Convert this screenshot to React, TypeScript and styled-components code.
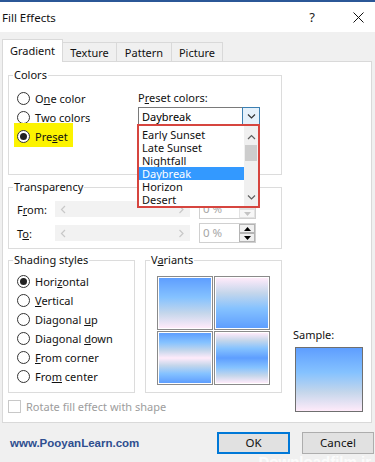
import React from "react";
import styled, { createGlobalStyle, css } from "styled-components";

const daybreak = ["#5e9eff", "#85c2ff", "#c4d6eb", "#ffebfa"];

const gradients = {
  down: `linear-gradient(180deg, ${daybreak[0]} 0%, ${daybreak[1]} 39%, ${daybreak[2]} 70%, ${daybreak[3]} 100%)`,
  up: `linear-gradient(0deg, ${daybreak[0]} 0%, ${daybreak[1]} 39%, ${daybreak[2]} 70%, ${daybreak[3]} 100%)`,
  outer: `linear-gradient(180deg, ${daybreak[0]} 0%, ${daybreak[1]} 19%, ${daybreak[2]} 35%, ${daybreak[3]} 50%, ${daybreak[2]} 65%, ${daybreak[1]} 81%, ${daybreak[0]} 100%)`,
  inner: `linear-gradient(180deg, ${daybreak[3]} 0%, ${daybreak[2]} 15%, ${daybreak[1]} 31%, ${daybreak[0]} 50%, ${daybreak[1]} 69%, ${daybreak[2]} 85%, ${daybreak[3]} 100%)`,
};

const tabs = [
  { name: "Gradient", width: 61 },
  { name: "Texture", width: 54 },
  { name: "Pattern", width: 55 },
  { name: "Picture", width: 51 },
];

const presets = ["Early Sunset", "Late Sunset", "Nightfall", "Daybreak", "Horizon", "Desert"];

const shading = [
  "Hori&zontal",
  "&Vertical",
  "Diagonal &up",
  "Diagonal &down",
  "&From corner",
  "Fro&m center",
];

// "&" marks the access key, as in a Windows resource file
function accel(text: string) {
  const i = text.indexOf("&");
  if (i < 0) return text;
  return (
    <>
      {text.slice(0, i)}
      <u>{text[i + 1]}</u>
      {text.slice(i + 2)}
    </>
  );
}

function Radio({ label, checked, highlight }: { label: string; checked?: boolean; highlight?: boolean }) {
  return (
    <RadioRow $highlight={highlight}>
      <RadioCircle $checked={checked} />
      <span>{accel(label)}</span>
    </RadioRow>
  );
}

function Chevron({ dir, color = "#606060" }: { dir: "up" | "down" | "left" | "right"; color?: string }) {
  const d = {
    up: "M1 5 L4.5 1.5 L8 5",
    down: "M1 1.5 L4.5 5 L8 1.5",
    left: "M5 1 L1.5 4.5 L5 8",
    right: "M1.5 1 L5 4.5 L1.5 8",
  }[dir];
  const vertical = dir === "up" || dir === "down";
  return (
    <svg width={vertical ? 9 : 7} height={vertical ? 7 : 9} viewBox={vertical ? "0 0 9 7" : "0 0 7 9"}>
      <path d={d} fill="none" stroke={color} strokeWidth="1.2" />
    </svg>
  );
}

function Spin({ disabled }: { disabled?: boolean }) {
  const c = disabled ? "#c4c4c4" : "#000";
  return (
    <SpinBox>
      <SpinText>0 %</SpinText>
      <SpinButtons>
        <SpinButton $disabled={disabled}>
          <svg width="7" height="4" viewBox="0 0 7 4">
            <path d="M0 4 L3.5 0 L7 4 Z" fill={c} />
          </svg>
        </SpinButton>
        <SpinButton $disabled={disabled}>
          <svg width="7" height="4" viewBox="0 0 7 4">
            <path d="M0 0 L3.5 4 L7 0 Z" fill={c} />
          </svg>
        </SpinButton>
      </SpinButtons>
    </SpinBox>
  );
}

function TransparencyRow({ label, disabled }: { label: string; disabled?: boolean }) {
  return (
    <TransRow>
      <TransLabel>{accel(label)}</TransLabel>
      <Slider>
        <Chevron dir="left" color="#c8c8c8" />
        <Chevron dir="right" color="#c8c8c8" />
      </Slider>
      <Spin disabled={disabled} />
    </TransRow>
  );
}

export default function App() {
  return (
    <>
      <GlobalStyle />
      <Window>
        <TitleBar>
          <Title>Fill Effects</Title>
          <TitleButtons>
            <TitleButton>?</TitleButton>
            <TitleButton>
              <svg width="11" height="11" viewBox="0 0 11 11">
                <path d="M0.5 0.5 L10.5 10.5 M10.5 0.5 L0.5 10.5" stroke="#111" strokeWidth="1" />
              </svg>
            </TitleButton>
          </TitleButtons>
        </TitleBar>

        <TabStrip>
          {tabs.map((t, i) => (
            <Tab key={t.name} $active={i === 0} $width={t.width}>
              {t.name}
            </Tab>
          ))}
        </TabStrip>

        <Panel>
          <MainColumn>
            <Group $pad="7px 8px 28px 8px">
              <Legend>Colors</Legend>
              <ColorsGrid>
                <RadioColumn>
                  <Radio label="O&ne color" />
                  <Radio label="&Two colors" />
                  <Radio label="Pre&set" checked highlight />
                </RadioColumn>
                <div>
                  <PresetLabel>{accel("P&reset colors:")}</PresetLabel>
                  <Combo>
                    <ComboText>Daybreak</ComboText>
                    <ComboButton>
                      <Chevron dir="down" color="#333" />
                    </ComboButton>
                  </Combo>
                </div>
              </ColorsGrid>
            </Group>

            <Group $pad="5px 8px 5px 8px" $top={5}>
              <Legend>Transparency</Legend>
              <TransRows>
                <TransparencyRow label="F&rom:" disabled />
                <TransparencyRow label="T&o:" />
              </TransRows>
            </Group>

            <GroupRow>
              <Group $pad="5px 8px 6px 8px" $width={127}>
                <Legend>Shading styles</Legend>
                {shading.map((s, i) => (
                  <Radio key={s} label={s} checked={i === 0} />
                ))}
              </Group>
              <Group $pad="9px 8px 0 11px" $grow>
                <VariantsLegend>{accel("V&ariants")}</VariantsLegend>
                <TileGrid>
                  <Tile $fill={gradients.down} />
                  <Tile $fill={gradients.up} />
                  <Tile $fill={gradients.outer} />
                  <Tile $fill={gradients.inner} />
                </TileGrid>
              </Group>
            </GroupRow>

            <CheckRow>
              <CheckBox />
              <span>Rotate fill effect with shape</span>
            </CheckRow>
          </MainColumn>

          <SampleColumn>
            <SampleLabel>Sample:</SampleLabel>
            <SampleBox $fill={gradients.down} />
          </SampleColumn>

          <PresetList>
            <ListItems>
              {presets.map((p) => (
                <ListItem key={p} $selected={p === "Daybreak"}>
                  {p}
                </ListItem>
              ))}
            </ListItems>
            <ScrollBar>
              <ScrollArrow>
                <Chevron dir="up" />
              </ScrollArrow>
              <ScrollThumb />
              <ScrollSpacer />
              <ScrollArrow>
                <Chevron dir="down" />
              </ScrollArrow>
            </ScrollBar>
          </PresetList>
        </Panel>

        <Footer>
          <SiteLink>www.PooyanLearn.com</SiteLink>
          <Button $default $width={73}>OK</Button>
          <Button $width={72}>Cancel</Button>
        </Footer>

        <Watermark>Downloadfilm.ir</Watermark>
      </Window>
    </>
  );
}

const GlobalStyle = createGlobalStyle`
  html, body {
    margin: 0;
    padding: 0;
  }

  body {
    font-family: "Noto Sans", "Segoe UI", sans-serif;
    font-size: 11px;
    color: #000;
    background: #f0f0f0;
  }

  * {
    box-sizing: border-box;
  }
`;

const Window = styled.div`
  position: relative;
  width: 375px;
  height: 462px;
  overflow: hidden;
  background: #f0f0f0;
`;

const TitleBar = styled.div`
  height: 32px;
  border-top: 2px solid #2b5797;
  background: #fff;
  display: flex;
  align-items: center;
  padding-left: 2px;
`;

const Title = styled.div`
  flex: 1;
  font-size: 11.5px;
  color: #111;
`;

const TitleButtons = styled.div`
  display: flex;
  height: 100%;
  margin-right: -6px;
`;

const TitleButton = styled.div`
  width: 46px;
  display: flex;
  align-items: center;
  justify-content: center;
  font-size: 13px;
  color: #222;
`;

const TabStrip = styled.div`
  height: 29px;
  display: flex;
  align-items: flex-end;
  padding-left: 2px;
  position: relative;
  z-index: 1;
`;

const Tab = styled.div<{ $active?: boolean; $width: number }>`
  width: ${(p) => p.$width}px;
  height: 19px;
  display: flex;
  align-items: center;
  justify-content: center;
  border: 1px solid #d9d9d9;
  border-bottom: none;
  border-left-width: 0;
  background: #f0f0f0;
  color: #111;

  ${(p) =>
    p.$active &&
    css`
      height: 23px;
      margin-bottom: -1px;
      border-left-width: 1px;
      background: #fff;
      padding-bottom: 2px;
    `}
`;

const Panel = styled.div`
  position: relative;
  margin-left: 2px;
  width: 370px;
  height: 362px;
  border: 1px solid #d9d9d9;
  background: #fff;
  display: flex;
  padding: 6px 0 9px 5px;
`;

const MainColumn = styled.div`
  width: 274px;
  display: flex;
  flex-direction: column;
`;

const Group = styled.fieldset<{ $pad: string; $top?: number; $width?: number; $grow?: boolean }>`
  margin: ${(p) => p.$top ?? 0}px 0 0 0;
  padding: ${(p) => p.$pad};
  border: 1px solid #dcdcdc;
  min-width: 0;
  ${(p) => p.$width && `width: ${p.$width}px;`}
  ${(p) => p.$grow && `flex: 1;`}
`;

const Legend = styled.legend`
  margin-left: -4px;
  padding: 0 1px;
  line-height: 14px;
  color: #111;
`;

const VariantsLegend = styled(Legend)`
  margin-left: -7px;
`;

const ColorsGrid = styled.div`
  display: grid;
  grid-template-columns: 121px 122px;
`;

const RadioColumn = styled.div`
  display: flex;
  flex-direction: column;
  align-items: flex-start;
`;

const RadioRow = styled.label<{ $highlight?: boolean }>`
  display: flex;
  align-items: center;
  gap: 5px;
  height: 19px;
  color: #111;

  ${(p) =>
    p.$highlight &&
    css`
      height: 24px;
      margin: -4px 0 -1px -3px;
      padding: 4px 5px 1px 3px;
      background: #fcf300;
    `}
`;

const RadioCircle = styled.span<{ $checked?: boolean }>`
  width: 13px;
  height: 13px;
  flex: none;
  border-radius: 50%;
  border: 1px solid #333;
  background: #fff;
  display: flex;
  align-items: center;
  justify-content: center;

  &::after {
    content: "";
    width: 7px;
    height: 7px;
    border-radius: 50%;
    background: #222;
    display: ${(p) => (p.$checked ? "block" : "none")};
  }
`;

const PresetLabel = styled.div`
  line-height: 17px;
  color: #111;
`;

const Combo = styled.div`
  margin-top: 1px;
  width: 122px;
  height: 21px;
  border: 1px solid #7a7a7a;
  display: flex;
  background: #fff;
`;

const ComboText = styled.div`
  flex: 1;
  padding: 1px 0 0 3px;
  line-height: 16px;
`;

const ComboButton = styled.div`
  width: 18px;
  margin: -1px -1px -1px 0;
  border: 1px solid #3c7fb1;
  background: #e5f1fb;
  display: flex;
  align-items: center;
  justify-content: center;
  padding-bottom: 2px;
`;

const TransRows = styled.div`
  display: flex;
  flex-direction: column;
  gap: 4px;
`;

const TransRow = styled.div`
  display: flex;
  align-items: center;
  height: 20px;
`;

const TransLabel = styled.div`
  width: 38px;
  color: #111;
`;

const Slider = styled.div`
  width: 135px;
  height: 16px;
  background: #f2f2f2;
  display: flex;
  align-items: center;
  justify-content: space-between;
  padding: 0 5px;
  margin-right: 9px;
`;

const SpinBox = styled.div`
  width: 57px;
  height: 20px;
  border: 1px solid #d0d0d0;
  display: flex;
  background: #fff;
`;

const SpinText = styled.div`
  flex: 1;
  padding-left: 3px;
  line-height: 18px;
  font-size: 11.5px;
  color: #a6a6a6;
`;

const SpinButtons = styled.div`
  width: 16px;
  display: flex;
  flex-direction: column;
`;

const SpinButton = styled.div<{ $disabled?: boolean }>`
  flex: 1;
  display: flex;
  align-items: center;
  justify-content: center;
  border: 1px solid ${(p) => (p.$disabled ? "#e2e2e2" : "#b4b4b4")};
  background: ${(p) => (p.$disabled ? "#f7f7f7" : "#f0f0f0")};
`;

const GroupRow = styled.div`
  display: flex;
  gap: 10px;
  margin-top: 4px;
`;

const TileGrid = styled.div`
  display: grid;
  grid-template-columns: 56px 56px;
  grid-auto-rows: 54px;
  gap: 1px;
`;

const Tile = styled.div<{ $fill: string }>`
  border: 1px solid #8a8a8a;
  padding: 1px;
  background: ${(p) => p.$fill} content-box, #fff;
`;

const CheckRow = styled.div`
  display: flex;
  align-items: center;
  gap: 5px;
  height: 13px;
  margin-top: 7px;
  color: #9d9d9d;
`;

const CheckBox = styled.span`
  width: 13px;
  height: 13px;
  border: 1px solid #c8c8c8;
  background: #fff;
`;

const SampleColumn = styled.div`
  margin-left: 11px;
  display: flex;
  flex-direction: column;
  justify-content: flex-end;
  padding-bottom: 1px;
`;

const SampleLabel = styled.div`
  line-height: 14px;
  margin-bottom: 5px;
  color: #111;
`;

const SampleBox = styled.div<{ $fill: string }>`
  margin-left: 2px;
  width: 68px;
  height: 65px;
  border: 1px solid #6f6f6f;
  background: ${(p) => p.$fill};
`;

const PresetList = styled.div`
  position: absolute;
  left: 134px;
  top: 62px;
  width: 123px;
  height: 84px;
  border: 2px solid #d6453f;
  background: #fff;
  display: flex;
`;

const ListItems = styled.div`
  flex: 1;
  padding-top: 2px;
`;

const ListItem = styled.div<{ $selected?: boolean }>`
  height: 13px;
  line-height: 13px;
  padding-left: 3px;
  font-size: 11px;
  color: #111;
  overflow: hidden;

  ${(p) =>
    p.$selected &&
    css`
      background: #3399ff;
      color: #fff;
    `}
`;

const ScrollBar = styled.div`
  width: 14px;
  background: #f0f0f0;
  display: flex;
  flex-direction: column;
  padding: 3px 0 1px;
`;

const ScrollArrow = styled.div`
  height: 16px;
  display: flex;
  align-items: center;
  justify-content: center;
`;

const ScrollThumb = styled.div`
  height: 16px;
  margin: 0 1px;
  background: #cdcdcd;
`;

const ScrollSpacer = styled.div`
  flex: 1;
`;

const Footer = styled.div`
  height: 39px;
  display: flex;
  align-items: center;
  gap: 12px;
  padding: 0 1px 0 10px;
`;

const SiteLink = styled.div`
  flex: 1;
  font-family: "Liberation Sans", Arial, sans-serif;
  font-weight: 700;
  font-size: 11.5px;
  color: #2e4e8f;
`;

const Button = styled.div<{ $default?: boolean; $width: number }>`
  width: ${(p) => p.$width}px;
  height: 22px;
  display: flex;
  align-items: center;
  justify-content: center;
  background: #e1e1e1;
  border: 1px solid #adadad;
  font-size: 11.5px;
  color: #111;

  ${(p) =>
    p.$default &&
    css`
      border: 2px solid #0078d7;
    `}
`;

const Watermark = styled.div`
  position: absolute;
  right: 4px;
  bottom: -8px;
  font-family: "Liberation Sans", Arial, sans-serif;
  font-weight: 700;
  font-size: 15px;
  line-height: 17px;
  color: rgba(255, 255, 255, 0.8);
`;
